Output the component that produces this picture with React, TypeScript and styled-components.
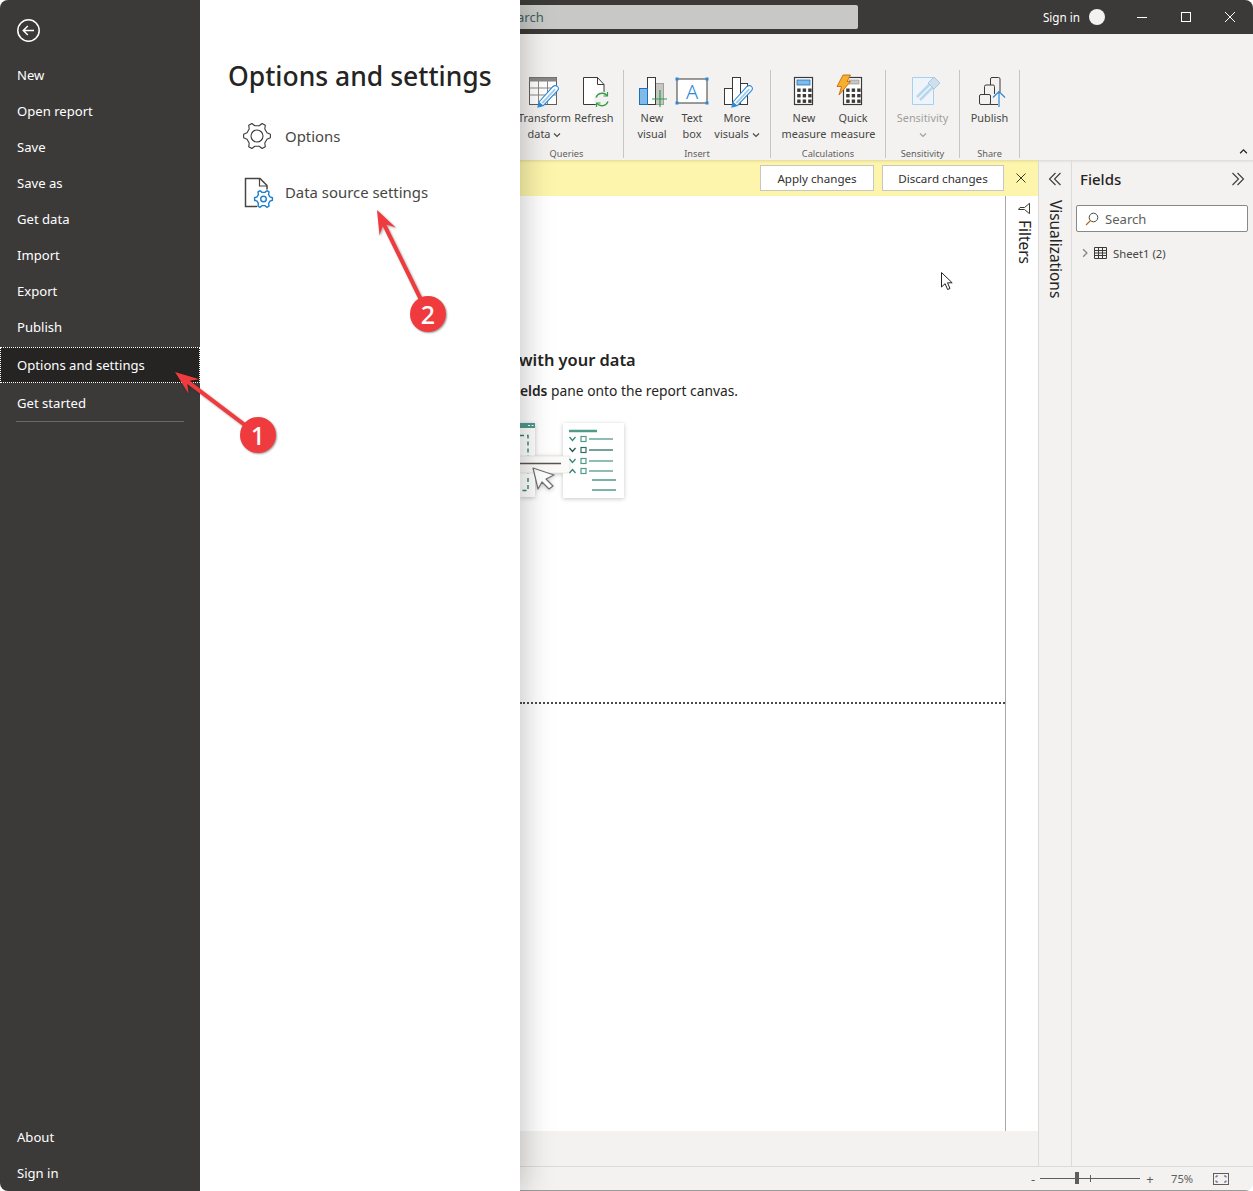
import { ReactNode } from 'react';
import styled, { createGlobalStyle } from 'styled-components';

const GlobalStyle = createGlobalStyle`
  html, body {
    margin: 0;
    padding: 0;
    background: #fff;
  }
  body {
    font-family: "Noto Sans", "Open Sans", "Liberation Sans", sans-serif;
    color: #252423;
  }
`;

const Window = styled.div`
  position: relative;
  display: flex;
  width: 1253px;
  height: 1191px;
  box-sizing: border-box;
  overflow: hidden;
  border-radius: 8px;
  background: #f3f2f1;
`;

/* backstage left nav */
const Sidebar = styled.nav`
  position: relative;
  z-index: 3;
  display: flex;
  flex-direction: column;
  flex: 0 0 200px;
  background: #3b3a39;
  color: #fff;
`;

const BackButton = styled.div`
  display: flex;
  align-items: center;
  height: 57px;
  padding: 3px 0 0 16px;
  box-sizing: border-box;
`;

const NavItem = styled.div<{ $active?: boolean }>`
  display: flex;
  align-items: center;
  height: 36px;
  padding-left: ${(p) => (p.$active ? '16px' : '17px')};
  box-sizing: border-box;
  font-size: 13.1px;
  ${(p) =>
    p.$active &&
    `
    margin: 2px 0;
    background: #252423;
    border: 1px dotted #fff;
  `}
`;

const NavRule = styled.div`
  height: 1px;
  margin: 0 16px;
  background: #6a6968;
`;

const NavBottom = styled.div`
  margin-top: auto;
`;

const Panel = styled.section`
  position: relative;
  z-index: 2;
  flex: 0 0 320px;
  padding: 56px 0 0 28px;
  box-sizing: border-box;
  background: #fff;
  box-shadow: 0 0 32px rgba(0, 0, 0, 0.28);
`;

const PanelTitle = styled.h1`
  margin: 0 0 12px;
  height: 40px;
  font-size: 26.5px;
  line-height: 40px;
  font-weight: 500;
  color: #252423;
  white-space: nowrap;
`;

const PanelRow = styled.div`
  display: flex;
  align-items: center;
  height: 56px;
  padding-left: 15px;
  gap: 14px;
  font-size: 14.9px;
  color: #484644;
`;

const PanelIcon = styled.span`
  display: flex;
  width: 28px;
  svg {
    overflow: visible;
    flex: none;
  }
`;

/* the report window behind the backstage */
const Main = styled.main`
  display: flex;
  flex-direction: column;
  flex: 1;
  min-width: 0;
`;

const TitleBar = styled.header`
  display: flex;
  align-items: center;
  flex: 0 0 34px;
  background: #3b3a39;
  color: #fff;
`;

const SearchBar = styled.div`
  display: flex;
  align-items: center;
  width: 338px;
  height: 24px;
  border-radius: 0 2px 2px 0;
  background: #c8c8c6;
  color: #3e5f5a;
  font-size: 13px;
`;

const SearchClip = styled.span`
  margin-left: -3px;
`;

const SignIn = styled.span`
  margin-left: auto;
  font-size: 11.7px;
`;

const Avatar = styled.span`
  width: 16px;
  height: 16px;
  margin: 0 15px 0 9px;
  border-radius: 50%;
  background: #f3f2f1;
`;

const WindowButton = styled.span`
  display: flex;
  justify-content: center;
  align-items: center;
  width: 44px;
  height: 34px;
`;

const TitleEnd = styled.span`
  width: 1px;
`;

const Ribbon = styled.div`
  position: relative;
  display: flex;
  flex: 0 0 126px;
  padding-top: 36px;
  box-sizing: border-box;
  background: #f3f2f1;
  overflow: hidden;
`;

const Group = styled.div<{ $width: number; $clipped?: boolean }>`
  display: flex;
  flex-direction: column;
  flex: 0 0 ${(p) => p.$width}px;
  height: 88px;
  box-sizing: border-box;
  padding-left: ${(p) => (p.$clipped ? '11px' : '8px')};
  margin-left: ${(p) => (p.$clipped ? '-13px' : '0')};
  border-right: 1px solid #c8c6c4;
`;

const GroupButtons = styled.div`
  display: flex;
`;

const RibbonButton = styled.div<{ $width: number; $muted?: boolean }>`
  display: flex;
  flex-direction: column;
  align-items: center;
  flex: 0 0 ${(p) => p.$width}px;
  padding-top: 6px;
  font-size: 10.9px;
  line-height: 16px;
  color: ${(p) => (p.$muted ? '#a19f9d' : '#484644')};
  white-space: nowrap;
  text-align: center;
`;

const RibbonIcon = styled.div`
  height: 34px;
`;

const GroupLabel = styled.div`
  margin: auto 0 0 -8px;
  height: 8px;
  font-size: 9.2px;
  line-height: 8px;
  text-align: center;
  color: #605e5c;
`;

const CollapseRibbon = styled.div`
  position: absolute;
  right: 5px;
  bottom: 5px;
  display: flex;
`;

const Workspace = styled.div`
  display: flex;
  flex: 1;
  min-height: 0;
`;

const ReportColumn = styled.div`
  display: flex;
  flex-direction: column;
  flex: 0 0 518px;
  border-right: 1px solid #dcdbd9;
  box-sizing: content-box;
`;

const Notice = styled.div`
  display: flex;
  align-items: center;
  justify-content: flex-end;
  flex: 0 0 36px;
  gap: 8px;
  background: #fdf5ab;
  box-shadow: inset 0 3px 3px -2px rgba(0, 0, 0, 0.12);
`;

const NoticeButton = styled.div<{ $width: number }>`
  display: flex;
  align-items: center;
  justify-content: center;
  width: ${(p) => p.$width}px;
  height: 26px;
  box-sizing: border-box;
  border: 1px solid #c8c6c4;
  background: #fff;
  font-size: 11.6px;
  color: #323130;
`;

const NoticeClose = styled.div`
  display: flex;
  justify-content: center;
  width: 34px;
  margin-left: -8px;
`;

const CanvasRow = styled.div`
  display: flex;
  flex: 1;
  min-height: 0;
`;

const Canvas = styled.div`
  flex: 0 0 486px;
  padding-top: 152px;
  box-sizing: border-box;
  overflow: hidden;
  background: #fff;
  border-right: 1px solid #a8a8a8;
`;

const CanvasTitle = styled.div`
  height: 24px;
  margin-left: -1px;
  font-size: 16.4px;
  line-height: 24px;
  font-weight: 600;
  color: #252423;
`;

const CanvasText = styled.div`
  height: 20px;
  margin-top: 9px;
  font-size: 13.8px;
  line-height: 20px;
  color: #252423;
  white-space: nowrap;
  b {
    font-weight: 600;
  }
`;

const Illustration = styled.div`
  height: 84px;
  margin-top: 19px;
`;

const PageFold = styled.div`
  margin-top: 198px;
  border-top: 2px dotted #4a4a4a;
`;

const FiltersPane = styled.div`
  display: flex;
  flex-direction: column;
  align-items: center;
  flex: 1;
  padding: 6px 0 0 3px;
  background: #fff;
`;

const VerticalLabel = styled.div`
  writing-mode: vertical-rl;
  font-size: 15.4px;
  line-height: 18px;
  color: #252423;
  white-space: nowrap;
`;

const FiltersLabel = styled(VerticalLabel)`
  margin-top: 5px;
`;

const PageStrip = styled.div`
  flex: 0 0 35px;
  background: #f3f2f1;
`;

const VisualizationsPane = styled.aside`
  display: flex;
  flex-direction: column;
  align-items: center;
  flex: 0 0 33px;
  padding-top: 12px;
  box-sizing: border-box;
  border-right: 1px solid #dcdbd9;
  box-shadow: inset 0 3px 3px -2px rgba(0, 0, 0, 0.12);
`;

const VisualizationsLabel = styled(VerticalLabel)`
  margin-top: 14px;
`;

const FieldsPane = styled.aside`
  display: flex;
  flex-direction: column;
  flex: 1;
  padding: 0 5px 0 4px;
  box-shadow: inset 0 3px 3px -2px rgba(0, 0, 0, 0.12);
`;

const FieldsHeader = styled.div`
  display: flex;
  align-items: center;
  justify-content: space-between;
  height: 38px;
  padding: 0 3px 0 4px;
  font-size: 15px;
  font-weight: 500;
  color: #252423;
`;

const FieldSearch = styled.div`
  display: flex;
  align-items: center;
  height: 27px;
  margin-top: 7px;
  padding-left: 8px;
  gap: 6px;
  box-sizing: border-box;
  border: 1px solid #8a8886;
  border-radius: 2px;
  background: #fff;
  font-size: 13.1px;
  color: #605e5c;
`;

const TreeRow = styled.div`
  display: flex;
  align-items: center;
  height: 20px;
  margin-top: 11px;
  padding-left: 4px;
  gap: 4px;
  font-size: 11.3px;
  color: #484644;
  span {
    margin-left: 2px;
  }
`;

const StatusBar = styled.footer`
  display: flex;
  align-items: center;
  flex: 0 0 25px;
  padding-left: 509px;
  box-sizing: border-box;
  border-top: 1px solid #dcdbd9;
  border-bottom: 1px solid #9b9b9b;
  background: #f3f2f1;
  color: #605e5c;
`;

const ZoomSign = styled.span`
  width: 8px;
  font-size: 13px;
  line-height: 14px;
  text-align: center;
`;

const ZoomTrack = styled.div`
  position: relative;
  width: 100px;
  height: 1px;
  margin: 0 6px 0 3px;
  background: #605e5c;
`;

const ZoomThumb = styled.span`
  position: absolute;
  left: 35px;
  top: -6px;
  width: 4px;
  height: 12px;
  background: #605e5c;
`;

const ZoomTick = styled.span`
  position: absolute;
  left: 50px;
  top: -3px;
  width: 1px;
  height: 7px;
  background: #605e5c;
`;

const ZoomValue = styled.span`
  margin-left: 17px;
  font-size: 11.2px;
`;

const FitIcon = styled.span`
  display: flex;
  margin-left: 20px;
`;

/* screenshot annotations, drawn over everything */
const ArrowLayer = styled.svg`
  position: absolute;
  z-index: 5;
  left: 0;
  top: 0;
  filter: drop-shadow(1px 1px 1px rgba(0, 0, 0, 0.35));
  pointer-events: none;
`;

const Badge = styled.div<{ $x: number; $y: number }>`
  position: absolute;
  z-index: 6;
  left: ${(p) => p.$x - 18}px;
  top: ${(p) => p.$y - 18}px;
  width: 36px;
  height: 36px;
  border-radius: 50%;
  background: #ef3b3d;
  box-shadow: 1px 1px 2px rgba(0, 0, 0, 0.4);
  color: #fff;
  font-size: 25px;
  font-weight: 500;
  line-height: 36px;
  text-align: center;
`;

const Pointer = styled.svg`
  position: absolute;
  z-index: 4;
  left: 940px;
  top: 271px;
`;

const BLUE = '#2b88d8';
const DARK = '#3b3a39';

const Chevron = ({ dir = 'down', size = 6, color = '#484644' }: { dir?: string; size?: number; color?: string }) => {
  const rotate = { down: 0, up: 180, right: -90 }[dir] ?? 0;
  return (
    <svg width={size + 2} height={size} viewBox="0 0 8 6" style={{ transform: `rotate(${rotate}deg)` }}>
      <path d="M1 1.5 4 4.5 7 1.5" fill="none" stroke={color} strokeWidth="1.1" />
    </svg>
  );
};

const DoubleChevron = ({ left }: { left?: boolean }) => (
  <svg width="14" height="14" viewBox="0 0 14 14" style={left ? { transform: 'scaleX(-1)' } : undefined}>
    <path d="M1.5 1 7.5 7 1.5 13M6.5 1 12.5 7 6.5 13" fill="none" stroke="#3b3a39" strokeWidth="1.1" />
  </svg>
);

const gearPath = (cx: number, cy: number, outer: number, root: number, teeth = 6) => {
  const step = (Math.PI * 2) / teeth;
  const pt = (a: number, r: number) => `${(cx + Math.cos(a) * r).toFixed(2)} ${(cy + Math.sin(a) * r).toFixed(2)}`;
  let d = '';
  for (let i = 0; i < teeth; i++) {
    const a = i * step;
    d += `${i ? 'L' : 'M'}${pt(a - step * 0.3, root)}L${pt(a - step * 0.13, outer)}L${pt(a + step * 0.13, outer)}L${pt(a + step * 0.3, root)}`;
  }
  return `${d}Z`;
};

const Pencil = ({ x = 0, y = 0 }: { x?: number; y?: number }) => (
  <g transform={`translate(${x} ${y})`}>
    <path d="M3 21 17 5.5c1.2-1.2 3.4-1.2 4.5 0s1 3 0 4.2L7.5 24.5 2 26z" fill="#fff" stroke={BLUE} strokeWidth="1.1" />
    <path d="M5.500 21.500 18.500 7.500l1.400 1.300L7 22.800z" fill="#9fcdf0" />
    <path d="M2 26 3 21l4.500 3.500z" fill={BLUE} />
  </g>
);

const TransformIcon = () => (
  <svg width="32" height="32" viewBox="0 0 32 32">
    <rect x="1.500" y="1.500" width="27" height="27" fill="#fff" stroke="#605e5c" />
    <rect x="1.500" y="1.500" width="27" height="4" fill="#8a8886" />
    <path d="M1.500 12h27M1.500 19h27M10.500 5v23M19.500 5v23" stroke="#8a8886" fill="none" />
    <Pencil x={8} y={5} />
  </svg>
);

const RefreshIcon = () => (
  <svg width="32" height="32" viewBox="0 0 32 32">
    <path d="M5.500 1.500h14l6.500 7v20H5.500z" fill="#fff" stroke="#3b3a39" />
    <path d="M19.500 1.500v7H26" fill="none" stroke="#3b3a39" />
    <circle cx="24" cy="23.500" r="8" fill="#f3f2f1" />
    <path d="M18 21.500a6.500 6.500 0 0 1 11-2M30 25.500a6.500 6.500 0 0 1-11 2" fill="none" stroke="#2f9e44" strokeWidth="1.300" />
    <path d="M29.500 16v4h-4M18.500 31v-4h4" fill="none" stroke="#2f9e44" strokeWidth="1.200" />
  </svg>
);

const NewVisualIcon = () => (
  <svg width="32" height="32" viewBox="0 0 32 32">
    <rect x="19.500" y="7.500" width="8" height="21" fill="#c8c6c4" stroke="#a19f9d" />
    <rect x="11.500" y="1.500" width="8" height="27" fill="#fff" stroke={DARK} />
    <rect x="3.500" y="12.500" width="8" height="16" fill="#7fbbea" stroke="#1f6fb5" />
    <path d="M24 14v17M16 23h15" stroke="#2f9e44" strokeWidth="1.200" />
  </svg>
);

const TextBoxIcon = () => (
  <svg width="34" height="32" viewBox="0 0 34 32">
    <rect x="2" y="3" width="30" height="24" fill="#fff" stroke={DARK} />
    <text x="17" y="22.500" textAnchor="middle" fontSize="20" fontWeight="300" fill={BLUE} fontFamily="Noto Sans, sans-serif">A</text>
    {[[2, 3], [32, 3], [2, 27], [32, 27]].map(([cx, cy]) => (
      <rect key={`${cx}-${cy}`} x={cx - 1.500} y={cy - 1.500} width="3" height="3" fill={BLUE} />
    ))}
  </svg>
);

const MoreVisualsIcon = () => (
  <svg width="32" height="32" viewBox="0 0 32 32">
    <rect x="3.500" y="12.500" width="8" height="16" fill="#fff" stroke={DARK} />
    <rect x="11.500" y="1.500" width="8" height="27" fill="#fff" stroke={DARK} />
    <rect x="19.500" y="7.500" width="7" height="21" fill="#fff" stroke={DARK} />
    <Pencil x={9} y={5} />
  </svg>
);

const CalcKeys = ({ x, y }: { x: number; y: number }) => (
  <g fill={DARK}>
    {[0, 1, 2].map((row) =>
      [0, 1, 2].map((col) => (
        <rect key={`${row}${col}`} x={x + col * 5.500} y={y + row * 5.500} width="3.400" height="3.400" />
      )),
    )}
  </g>
);

const NewMeasureIcon = () => (
  <svg width="32" height="32" viewBox="0 0 32 32">
    <rect x="6.500" y="1.500" width="18" height="27" fill="#fff" stroke={DARK} strokeWidth="1.200" />
    <rect x="9" y="4" width="13" height="5" fill="#7fbbea" stroke="#1f6fb5" strokeWidth="0.800" />
    <CalcKeys x={9.200} y={12.500} />
  </svg>
);

const QuickMeasureIcon = () => (
  <svg width="32" height="32" viewBox="0 0 32 32" style={{ overflow: 'visible' }}>
    <rect x="6.500" y="1.500" width="18" height="27" fill="#fff" stroke={DARK} strokeWidth="1.200" />
    <rect x="12" y="4" width="10" height="4" fill="#c8c6c4" stroke="#8a8886" strokeWidth="0.600" />
    <CalcKeys x={9.200} y={12.500} />
    <path d="M6-1h7.500L10 5.500h3.500L2 19l2.500-8.500H0z" fill="#f7b02b" stroke="#ca6a0e" strokeWidth="0.900" />
  </svg>
);

const SensitivityIcon = () => (
  <svg width="32" height="32" viewBox="0 0 32 32" style={{ overflow: 'visible' }}>
    <path d="M5.500 1.500h21v27h-21z" fill="#eef4f9" stroke="#a5d1ef" />
    <path d="M10 21 23 8M13 24 26 11" fill="none" stroke="#b9d7ec" strokeWidth="2.500" />
    <path d="M21 7l6-6 6 6-6 6z" fill="#cfdfeb" stroke="#a5c8e4" />
  </svg>
);

const PublishIcon = () => (
  <svg width="32" height="32" viewBox="0 0 32 32">
    <g transform="translate(3 0)">
      <path d="M13.500 9V3A1.500 1.500 0 0 1 15 1.500h6.500A1.500 1.500 0 0 1 23 3v13" fill="none" stroke={DARK} />
      <path d="M7.500 18v-7.500A1.500 1.500 0 0 1 9 9h7a1.500 1.500 0 0 1 1.500 1.500V18" fill="none" stroke={DARK} />
      <rect x="2.500" y="18.500" width="11" height="10" rx="1.500" fill="none" stroke={DARK} />
      <path d="M13 28.500h8" stroke={DARK} />
      <path d="M22 31V15.500M16 21.500l6-6 6 6" fill="none" stroke={BLUE} strokeWidth="1.200" />
    </g>
  </svg>
);

const OptionsIcon = () => (
  <svg width="28" height="28" viewBox="0 0 28 28">
    <path d={gearPath(14, 14, 13.500, 10.500)} fill="none" stroke="#3b3a39" strokeWidth="1.100" strokeLinejoin="round" />
    <circle cx="14" cy="14" r="6" fill="none" stroke="#3b3a39" strokeWidth="1.100" />
  </svg>
);

const DataSourceIcon = () => (
  <svg width="30" height="32" viewBox="0 0 30 32">
    <path d="M14 30.500H2.500V2.500H17l7 7v4" fill="none" stroke="#484644" strokeWidth="1.500" />
    <path d="M16.500 2.500v7.500H24" fill="none" stroke="#484644" strokeWidth="1.200" />
    <path d={gearPath(20.500, 23, 9, 6.800)} fill="#fff" stroke="#1f7fc9" strokeWidth="1.400" strokeLinejoin="round" />
    <circle cx="20.500" cy="23" r="2.800" fill="none" stroke="#1f7fc9" strokeWidth="1.400" />
  </svg>
);

const ReportIllustration = () => (
  <svg width="110" height="84" viewBox="0 0 110 84" style={{ display: 'block', filter: 'drop-shadow(0 1px 2px rgba(0,0,0,.22))' }}>
    <rect x="-5" y="3" width="20" height="74" fill="#fff" />
    <rect x="-5" y="3" width="20" height="5" fill="#4f9a8b" />
    <path d="M8 5.500h2M11.500 5.500h2" stroke="#fff" />
    <path d="M0 15.500h8v40M8 58v12.500H0" fill="none" stroke="#2f8573" strokeDasharray="4 3" strokeWidth="1.400" />
    <rect x="43" y="3" width="61" height="75" fill="#fff" />
    <rect x="-5" y="36" width="55" height="17" fill="#fbfaf8" stroke="#e4e0d8" strokeWidth="0.700" />
    <path d="M0 43.500h41" stroke="#555" strokeWidth="1.600" />
    <path d="M49 11h28" stroke="#4f9a8b" strokeWidth="2.500" />
    {[19, 30, 41, 51].map((y, i) => (
      <g key={y} fill="none">
        <path d={i === 3 ? `M49.500 ${y + 2}l3-3.500 3 3.500` : `M49.500 ${y - 2}l3 3.500 3-3.500`} stroke={i === 1 ? '#1f4f46' : '#2f8573'} strokeWidth="1.200" />
        <rect x="61" y={y - 2.500} width="5" height="5" stroke={i === 1 ? '#2f6f62' : '#4f9a8b'} strokeWidth="1.200" />
        <path d={`M69 ${y}h24`} stroke={i === 1 ? '#2f6f62' : '#4f9a8b'} strokeWidth="1.300" />
      </g>
    ))}
    <path d="M72 60h24M72 70h24" stroke="#4f9a8b" strokeWidth="1.300" />
    <path d="M13 48 34 55l-8 4 7 7-4 3-7-7-4 7z" fill="#fff" stroke="#707070" strokeWidth="1.200" strokeLinejoin="round" />
  </svg>
);

const SmallFilter = () => (
  <svg width="12" height="13" viewBox="0 0 12 13">
    <path d="M.8 1h10.400L7 6v6L5 10.500V6z" fill="none" stroke="#3b3a39" strokeWidth="1" transform="rotate(90 6 6.500)" />
  </svg>
);

type ButtonSpec = { width: number; icon: ReactNode; lines: ReactNode[]; muted?: boolean };

const groups: { label: string; width: number; clipped?: boolean; buttons: ButtonSpec[] }[] = [
  {
    label: 'Queries',
    width: 117,
    clipped: true,
    buttons: [
      { width: 52, icon: <TransformIcon />, lines: ['Transform', <>data <Chevron /></>] },
      { width: 46, icon: <RefreshIcon />, lines: ['Refresh'] },
    ],
  },
  {
    label: 'Insert',
    width: 147,
    buttons: [
      { width: 40, icon: <NewVisualIcon />, lines: ['New', 'visual'] },
      { width: 40, icon: <TextBoxIcon />, lines: ['Text', 'box'] },
      { width: 50, icon: <MoreVisualsIcon />, lines: ['More', <>visuals <Chevron /></>] },
    ],
  },
  {
    label: 'Calculations',
    width: 115,
    buttons: [
      { width: 50, icon: <NewMeasureIcon />, lines: ['New', 'measure'] },
      { width: 48, icon: <QuickMeasureIcon />, lines: ['Quick', 'measure'] },
    ],
  },
  {
    label: 'Sensitivity',
    width: 74,
    buttons: [{ width: 57, icon: <SensitivityIcon />, lines: ['Sensitivity', <Chevron color="#a19f9d" />], muted: true }],
  },
  {
    label: 'Share',
    width: 60,
    buttons: [{ width: 43, icon: <PublishIcon />, lines: ['Publish'] }],
  },
];

const topNav = ['New', 'Open report', 'Save', 'Save as', 'Get data', 'Import', 'Export', 'Publish'];

export default function App() {
  return (
    <>
      <GlobalStyle />
      <Window>
        <Sidebar>
          <BackButton>
            <svg width="25" height="25" viewBox="0 0 25 25">
              <circle cx="12.500" cy="12.500" r="10.700" fill="none" stroke="#fff" strokeWidth="1.500" />
              <path d="M18 12.500H7.500M11.800 8 7.300 12.500l4.500 4.500" fill="none" stroke="#fff" strokeWidth="1.500" />
            </svg>
          </BackButton>
          {topNav.map((item) => (
            <NavItem key={item}>{item}</NavItem>
          ))}
          <NavItem $active>Options and settings</NavItem>
          <NavItem>Get started</NavItem>
          <NavRule />
          <NavBottom>
            <NavItem>About</NavItem>
            <NavItem>Sign in</NavItem>
          </NavBottom>
        </Sidebar>

        <Panel>
          <PanelTitle>Options and settings</PanelTitle>
          <PanelRow>
            <PanelIcon>
              <OptionsIcon />
            </PanelIcon>
            <span>Options</span>
          </PanelRow>
          <PanelRow>
            <PanelIcon>
              <DataSourceIcon />
            </PanelIcon>
            <span>Data source settings</span>
          </PanelRow>
        </Panel>

        <Main>
          <TitleBar>
            <SearchBar>
              <SearchClip>arch</SearchClip>
            </SearchBar>
            <SignIn>Sign in</SignIn>
            <Avatar />
            <WindowButton>
              <svg width="12" height="12" viewBox="0 0 12 12">
                <path d="M1 6.500h10" stroke="#fff" />
              </svg>
            </WindowButton>
            <WindowButton>
              <svg width="12" height="12" viewBox="0 0 12 12">
                <rect x="1.500" y="1.500" width="9" height="9" fill="none" stroke="#fff" />
              </svg>
            </WindowButton>
            <WindowButton>
              <svg width="12" height="12" viewBox="0 0 12 12">
                <path d="M1 1l10 10M11 1 1 11" stroke="#fff" />
              </svg>
            </WindowButton>
            <TitleEnd />
          </TitleBar>

          <Ribbon>
            {groups.map((group) => (
              <Group key={group.label} $width={group.width} $clipped={group.clipped}>
                <GroupButtons>
                  {group.buttons.map((button, i) => (
                    <RibbonButton key={i} $width={button.width} $muted={button.muted}>
                      <RibbonIcon>{button.icon}</RibbonIcon>
                      {button.lines.map((line, j) => (
                        <span key={j}>{line}</span>
                      ))}
                    </RibbonButton>
                  ))}
                </GroupButtons>
                <GroupLabel>{group.label}</GroupLabel>
              </Group>
            ))}
            <CollapseRibbon>
              <Chevron dir="up" size={7} color="#252423" />
            </CollapseRibbon>
          </Ribbon>

          <Workspace>
            <ReportColumn>
              <Notice>
                <NoticeButton $width={114}>Apply changes</NoticeButton>
                <NoticeButton $width={122}>Discard changes</NoticeButton>
                <NoticeClose>
                  <svg width="12" height="12" viewBox="0 0 12 12">
                    <path d="M1.500 1.500l9 9M10.500 1.500l-9 9" stroke="#3b3a39" />
                  </svg>
                </NoticeClose>
              </Notice>
              <CanvasRow>
                <Canvas>
                  <CanvasTitle>with your data</CanvasTitle>
                  <CanvasText>
                    <b>elds</b> pane onto the report canvas.
                  </CanvasText>
                  <Illustration>
                    <ReportIllustration />
                  </Illustration>
                  <PageFold />
                </Canvas>
                <FiltersPane>
                  <SmallFilter />
                  <FiltersLabel>Filters</FiltersLabel>
                </FiltersPane>
              </CanvasRow>
              <PageStrip />
            </ReportColumn>

            <VisualizationsPane>
              <DoubleChevron left />
              <VisualizationsLabel>Visualizations</VisualizationsLabel>
            </VisualizationsPane>

            <FieldsPane>
              <FieldsHeader>
                <span>Fields</span>
                <DoubleChevron />
              </FieldsHeader>
              <FieldSearch>
                <svg width="14" height="14" viewBox="0 0 14 14">
                  <circle cx="8.500" cy="5.500" r="4.300" fill="none" stroke="#484644" />
                  <path d="M5.500 8.500 1 13" stroke="#b5651d" strokeWidth="1.100" />
                </svg>
                <span>Search</span>
              </FieldSearch>
              <TreeRow>
                <Chevron dir="right" size={8} color="#8a8886" />
                <svg width="13" height="12" viewBox="0 0 13 12">
                  <path d="M.5.500h12v11H.500zM.5 3.500h12M.5 6h12M.5 8.500h12M4.500 1v10M8.500 1v10" fill="none" stroke="#3b3a39" strokeWidth="1" />
                </svg>
                <span>Sheet1 (2)</span>
              </TreeRow>
            </FieldsPane>
          </Workspace>

          <StatusBar>
            <ZoomSign>-</ZoomSign>
            <ZoomTrack>
              <ZoomThumb />
              <ZoomTick />
            </ZoomTrack>
            <ZoomSign>+</ZoomSign>
            <ZoomValue>75%</ZoomValue>
            <FitIcon>
              <svg width="16" height="12" viewBox="0 0 16 12">
                <rect x=".5" y=".5" width="15" height="11" fill="none" stroke="#605e5c" />
                <path d="M3 4.500V3h2M11 3h2v1.500M3 7.500V9h2M11 9h2V7.500" fill="none" stroke="#5c4f8a" />
              </svg>
            </FitIcon>
          </StatusBar>
        </Main>

        <ArrowLayer width="1253" height="1191" viewBox="0 0 1253 1191">
          <polygon points="175,372 199.400,379.300 189.700,380.700 259.200,433.400 256.800,436.600 187.300,383.900 188.600,393.700" fill="#ef3b3d" />
          <polygon points="377,210 395.700,227.600 386.300,224.400 429.800,313.100 426.200,314.900 382.700,226.200 379.500,235.600" fill="#ef3b3d" />
        </ArrowLayer>
        <Badge $x={258} $y={435}>1</Badge>
        <Badge $x={428} $y={314}>2</Badge>
        <Pointer width="14" height="20" viewBox="0 0 14 20">
          <path d="M1.500 1.500v14.500l3.600-3.300 2.500 5.800 2.400-1-2.500-5.700h4.700z" fill="#fff" stroke="#252423" strokeWidth="1" />
        </Pointer>
      </Window>
    </>
  );
}
